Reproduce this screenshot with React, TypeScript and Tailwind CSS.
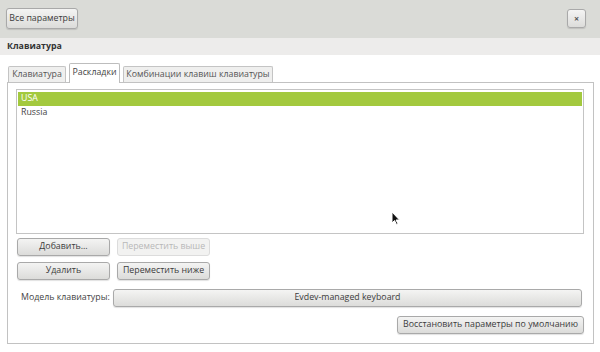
import React from "react";

const btn =
  "flex items-center justify-center whitespace-nowrap rounded-[3px] border border-[#a9a9a9] bg-gradient-to-b from-[#f4f4f3] to-[#dcdcda] text-[#3c3c3c] shadow-[0_1px_1px_rgba(0,0,0,0.12)]";

export default function App() {
  return (
    <div
      className="relative w-[600px] h-[352px] bg-white text-[8.8px] whitespace-nowrap text-[#3c3c3c] overflow-hidden"
      style={{ fontFamily: '"Open Sans", "Noto Sans", sans-serif' }}
    >
      {/* header */}
      <div className="h-[38px] bg-[#dadbd7] flex items-start justify-between pl-[6px] pr-[14px]">
        <button className={`${btn} mt-[8px] w-[72px] h-[21px]`}>Все параметры</button>
        <button className={`${btn} mt-[9px] w-[19px] h-[19px] text-[9px] font-bold text-[#555]`}>×</button>
      </div>
      {/* section band */}
      <div className="h-[17px] bg-[#edeceb] flex items-center pl-[7px] font-bold text-[#333]">
        Клавиатура
      </div>
      {/* content */}
      <div className="pt-[8px] pl-[7px] pr-[7px]">
        <div className="flex items-end h-[19px] pl-[1px] gap-[3px]">
          <div className="h-[16px] w-[58px] justify-center border border-b-0 border-[#c4c4c4] bg-[#efefee] rounded-t-[2px] flex items-center text-[#555]">
            Клавиатура
          </div>
          <div className="relative z-10 h-[20px] w-[51px] justify-center mb-[-1px] border border-b-0 border-[#bdbdbd] bg-white rounded-t-[2px] flex items-start pt-[2px] text-[#444]">
            Раскладки
          </div>
          <div className="h-[16px] w-[150px] justify-center border border-b-0 border-[#c4c4c4] bg-[#efefee] rounded-t-[2px] flex items-center text-[#555]">
            Комбинации клавиш клавиатуры
          </div>
        </div>
        <div className="h-[262px] w-[587px] border border-[#c2c2c2] pl-[8px] pr-[9px] pt-[6px]">
          <div className="h-[145px] border border-[#c4c4c4] pt-[2px] px-[1px]">
            <div className="h-[14px] bg-[#a3c93e] text-white flex items-center pl-[3px]">USA</div>
            <div className="h-[14px] flex items-center pl-[3px] text-[#444]">Russia</div>
          </div>
          <div className="flex gap-[7px] mt-[4px] pl-[1px]">
            <button className={`${btn} w-[93px] h-[18px]`}>Добавить...</button>
            <button className="flex items-center justify-center whitespace-nowrap w-[93px] h-[18px] rounded-[3px] border border-[#dcdcdc] bg-[#f2f2f1] text-[#b8b8b8]">
              Переместить выше
            </button>
          </div>
          <div className="flex gap-[7px] mt-[6px] pl-[1px]">
            <button className={`${btn} w-[93px] h-[18px]`}>Удалить</button>
            <button className={`${btn} w-[93px] h-[18px]`}>Переместить ниже</button>
          </div>
          <div className="flex items-center mt-[9px] h-[18px]">
            <div className="w-[97px] pl-[5px] text-[#444]">Модель клавиатуры:</div>
            <button className={`${btn} w-[469px] h-[18px]`}>Evdev-managed keyboard</button>
          </div>
          <div className="flex justify-end mt-[9px]">
            <button className={`${btn} w-[187px] h-[18px]`}>Восстановить параметры по умолчанию</button>
          </div>
        </div>
      </div>
      {/* mouse cursor */}
      <svg className="absolute left-[391px] top-[211px]" width="10" height="15" viewBox="0 0 10 15">
        <path d="M1 1 L1 12 L3.5 9.5 L5.5 13.5 L7 12.8 L5 9 L8.5 9 Z" fill="#111" stroke="#fff" strokeWidth="1" />
      </svg>
    </div>
  );
}
